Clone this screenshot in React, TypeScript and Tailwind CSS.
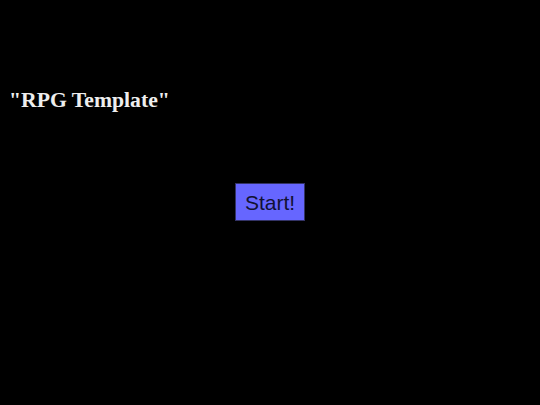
export default function App() {
  return (
    <div className="h-screen w-full bg-black flex flex-col">
      <h1 className="pt-[88px] pl-[9px] text-[21.7px] leading-[24px] font-bold text-[#eeeeee] font-['Liberation_Serif',serif]">
        "RPG Template"
      </h1>
      <div className="mt-[71px] flex justify-center">
        <button className="h-[38px] px-[9px] bg-[#6666ff] border border-[#333366] text-[21px] leading-none text-[#111133] font-['Liberation_Sans',Arial,sans-serif]">
          Start!
        </button>
      </div>
    </div>
  );
}
